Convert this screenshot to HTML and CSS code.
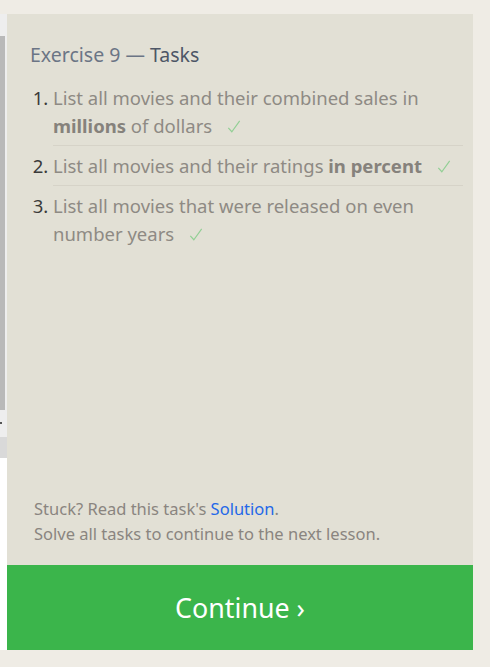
FILE: index.html
```html
<!DOCTYPE html>
<html>
<head>
<meta charset="utf-8">
<link rel="stylesheet" href="styles.css">
</head>
<body>
<div class="page">
  <div class="strip">
    <div class="strip-top"></div>
    <div class="strip-bar"></div>
    <div class="strip-gap"><span class="tick"></span></div>
    <div class="strip-mid"></div>
    <div class="strip-white"></div>
  </div>
  <div class="panel">
    <div class="content">
      <h2 class="title">Exercise 9 — <span class="strong">Tasks</span></h2>
      <ol class="tasks">
        <li>List all movies and their combined sales in <b>millions</b> of dollars<svg class="check" viewBox="0 0 16 16"><path d="M1.5 9.5 L5.5 14 L14.5 1.5"/></svg></li>
        <li>List all movies and their ratings <b>in percent</b><svg class="check" viewBox="0 0 16 16"><path d="M1.5 9.5 L5.5 14 L14.5 1.5"/></svg></li>
        <li>List all movies that were released on even number years<svg class="check" viewBox="0 0 16 16"><path d="M1.5 9.5 L5.5 14 L14.5 1.5"/></svg></li>
      </ol>
    </div>
    <div class="footer">
      <p>Stuck? Read this task's <a class="link" href="#">Solution</a>.</p>
      <p>Solve all tasks to continue to the next lesson.</p>
    </div>
    <div class="continue">Continue ›</div>
  </div>
</div>
</body>
</html>
```

FILE: styles.css
```css
html, body {
  margin: 0;
  padding: 0;
  background: #efece5;
  font-family: "Noto Sans", "Open Sans", sans-serif;
}
.page {
  display: flex;
  padding-top: 14px;
  height: 636px;
}
.strip {
  width: 7px;
  display: flex;
  flex-direction: column;
  background: #eeeeee;
}
.strip-top { height: 22px; }
.strip-bar {
  height: 374px;
  width: 5px;
  background: #b9b9b9;
}
.strip-gap {
  height: 27px;
  position: relative;
}
.tick {
  position: absolute;
  left: 0;
  top: 12px;
  width: 2px;
  height: 2px;
  background: #555;
}
.strip-mid {
  height: 21px;
  background: #d9d9d9;
}
.strip-white {
  flex: 1;
  background: #ffffff;
}
.panel {
  width: 466px;
  background: #e2e0d5;
  display: flex;
  flex-direction: column;
}
.content {
  padding: 29px 10px 0 23px;
  flex: 1;
}
.title {
  margin: 0 0 11px;
  font-size: 19.5px;
  font-weight: normal;
  line-height: 24px;
  color: #6b7585;
}
.title .strong {
  color: #4d5666;
}
.tasks {
  margin: 0;
  padding: 0 0 0 23px;
  font-size: 18.5px;
  line-height: 28px;
  color: #8e8a84;
}
.tasks li {
  padding: 6px 0 5px;
  border-bottom: 1px solid #d6d3c8;
}
.tasks li:last-child {
  border-bottom: none;
}
.tasks li::marker {
  color: #3a3a3a;
}
.tasks b {
  color: #86827c;
}
.check {
  display: inline-block;
  width: 14px;
  height: 15px;
  margin-left: 15px;
  vertical-align: -1px;
  fill: none;
  stroke: #92cf95;
  stroke-width: 1.3;
}
.footer {
  padding: 0 24px 19px 27px;
  font-size: 16.5px;
  line-height: 25px;
  color: #8a8580;
}
.footer p {
  margin: 0;
}
.link {
  color: #2468e8;
  text-decoration: none;
}
.continue {
  height: 85px;
  background: #3bb54b;
  color: #ffffff;
  font-size: 26.8px;
  display: flex;
  align-items: center;
  justify-content: center;
}
```
